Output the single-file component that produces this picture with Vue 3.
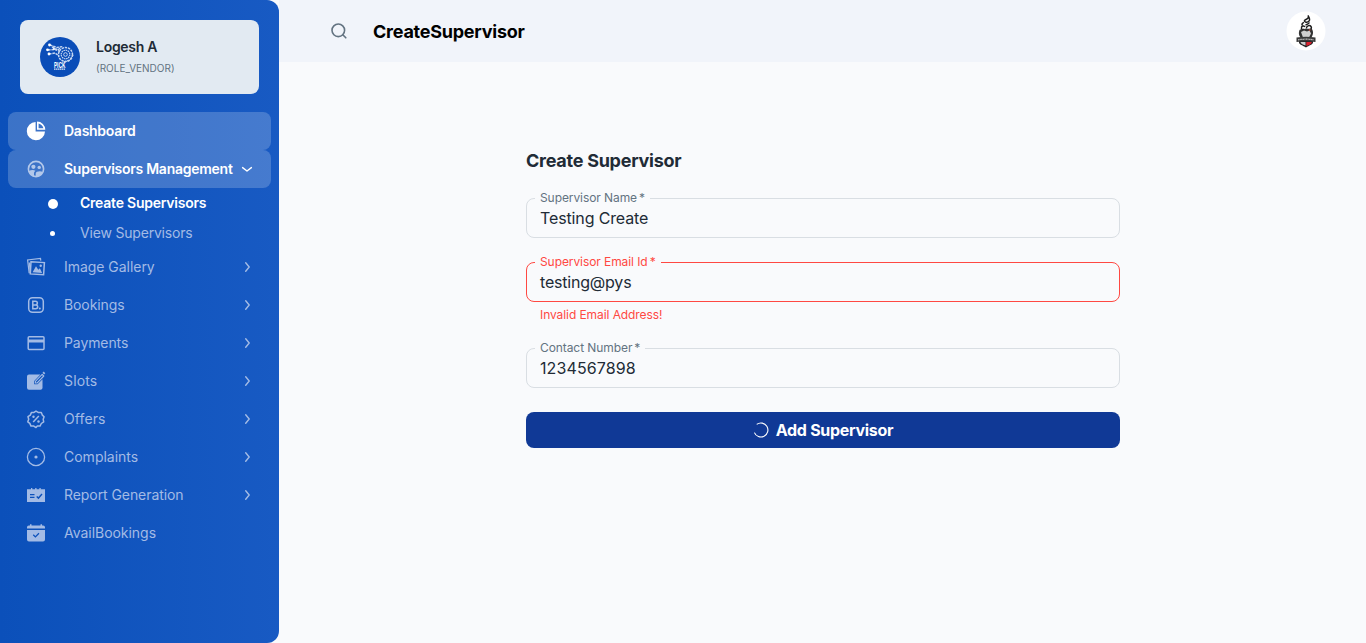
<script setup>
const before = [
  { label: 'Dashboard', icon: 'pie', active: true, ls: '-0.26px' },
  { label: 'Supervisors Management', icon: 'users', active: true, dim: true, arrow: 'down', ls: '-0.26px' },
]
const after = [
  { label: 'Image Gallery', icon: 'image', arrow: 'right', ls: '-0.04px' },
  { label: 'Bookings', icon: 'book', arrow: 'right', ls: '-0.1px' },
  { label: 'Payments', icon: 'card', arrow: 'right', ls: '-0.1px' },
  { label: 'Slots', icon: 'edit', arrow: 'right', ls: '0.15px' },
  { label: 'Offers', icon: 'offer', arrow: 'right', ls: '0.1px' },
  { label: 'Complaints', icon: 'dot', arrow: 'right', ls: '0px' },
  { label: 'Report Generation', icon: 'report', arrow: 'right', ls: '-0.07px' },
  { label: 'AvailBookings', icon: 'calendar', ls: '-0.03px' },
]
const rows = [...before, { sub: true }, ...after]
const fields = [
  { id: 'name', label: 'Supervisor Name', value: 'Testing Create' },
  { id: 'email', label: 'Supervisor Email Id', value: 'testing@pys', error: 'Invalid Email Address!' },
  { id: 'phone', label: 'Contact Number', value: '1234567898' },
]
</script>

<template>
  <div class="app">
    <aside class="sidebar">
      <div class="profile">
        <svg class="avatar" viewBox="0 0 40 40">
          <circle cx="20" cy="20" r="20" fill="#0a4db8" />
          <g fill="none" stroke="#c4d6f1">
            <circle cx="25.5" cy="17.5" r="7" stroke-width="1.5" stroke-dasharray="2.4 .8" />
            <circle cx="25.5" cy="17.5" r="4.3" stroke-width="1.2" stroke-dasharray="1.6 .6" />
            <circle cx="25.5" cy="17.5" r="1.8" stroke-width="1" />
            <path d="M10 8l7 2.500 6-1M8 13l7-.5 5 2M9 17l6-1 4 3M24 25l6-2 3-5M12 10l6 3 2-2" stroke-width="1.4" stroke-dasharray="2.6 .8" />
          </g>
          <g fill="#fff"><circle cx="9.5" cy="8" r="1.4" /><circle cx="7.500" cy="12.8" r="1.4" /><circle cx="9" cy="17" r="1.4" /><circle cx="14" cy="12" r="1.1" /></g>
          <text x="14" y="30.7" fill="#fff" font-size="8" font-weight="700" textLength="11.5" lengthAdjust="spacingAndGlyphs">PICK</text>
          <path d="M14 32.2h11.5" stroke="#dbe6f7" stroke-width="1.3" stroke-dasharray="1.5 .4" />
        </svg>
        <div class="who">
          <div class="pname">Logesh A</div>
          <div class="prole">(ROLE_VENDOR)</div>
        </div>
      </div>
      <nav>
        <template v-for="r in rows" :key="r.label || 'sub'">
          <div v-if="r.sub" class="subs">
            <div class="sub on"><i></i><span>Create Supervisors</span></div>
            <div class="sub"><i></i><span>View Supervisors</span></div>
          </div>
          <div v-else class="row" :class="{ active: r.active }">
            <svg class="icon" :class="{ dim: r.dim }" viewBox="0 0 24 24" fill="none" stroke="currentColor">
              <g v-if="r.icon === 'pie'" fill="currentColor" stroke="none">
                <path d="M11.6 3v9.4H21A9.1 9.1 0 1 1 11.6 3z" />
                <path fill-rule="evenodd" d="M13 2.5a8.3 8.3 0 0 1 8.3 8.3H13zM14.6 4.4v4.8h4.8a6.8 6.8 0 0 0-4.8-4.8z" />
              </g>
              <g v-else-if="r.icon === 'users'">
                <circle cx="12" cy="12" r="7.6" stroke-width="1.6" />
                <circle cx="9.4" cy="9.8" r="2.1" fill="currentColor" stroke="none" />
                <circle cx="15.2" cy="10.4" r="1.7" fill="currentColor" stroke="none" />
                <path d="M4.8 14.2c2-1.300 4.600-1.400 6.600-.5-1 .8-1.500 1.800-1.400 3v3a8 8 0 0 1-5.200-5.500zM11.700 20v-3.500c0-2.2 5-2.800 7.200-1.400-.9 2.800-3.500 4.900-7.200 4.900z" fill="currentColor" stroke="none" />
              </g>
              <g v-else-if="r.icon === 'image'">
                <path d="M5.200 18.200L3.600 5l12.900-1.500.3 2.200" stroke-width="1.200" />
                <path d="M7 6.800l13.400.8-.8 12.200-13.300-.9z" stroke-width="1.500" />
                <path d="M8.600 17.300L12 11.300l2.300 3.500 1.600-1.600 2.200 4.700z" fill="currentColor" stroke="none" />
                <circle cx="16.700" cy="10.800" r="1.200" fill="currentColor" stroke="none" />
                <path d="M5.300 7.500l1 10.500" stroke-width="1.200" />
              </g>
              <g v-else-if="r.icon === 'book'" stroke-width="1.5">
                <rect x="4.7" y="4.7" width="14.6" height="14.6" rx="3.800" />
                <path d="M8.800 8.2h2.7a1.8 1.8 0 0 1 0 3.7H8.800zm0 3.7h3a1.9 1.9 0 0 1 0 3.8h-3z" />
                <circle cx="15.8" cy="15.500" r="1" fill="currentColor" stroke="none" />
              </g>
              <g v-else-if="r.icon === 'card'">
                <rect x="4.200" y="5.800" width="15.800" height="12.600" rx="1" stroke-width="1.500" />
                <path d="M4 10h16" stroke-width="3" />
              </g>
              <g v-else-if="r.icon === 'edit'">
                <path d="M5 5.6h11.4L10.200 12v3.2h3.400l4.900-5v8.800A2 2 0 0 1 16.500 20.800H5a2 2 0 0 1-2-2V7.600a2 2 0 0 1 2-2z" fill="currentColor" stroke="none" />
                <path d="M11.400 14v-1.700l6.800-6.900 1.600 1.600-6.700 7z" stroke-width="1.100" stroke-linejoin="round" />
                <path d="M19.300 4.600l1.200-1.200" stroke-width="2.200" />
              </g>
              <g v-else-if="r.icon === 'offer'" stroke-width="1.5">
                <path d="M12 4.100l2.200 1.300h3.100l1 2.700 1.800 1.700-.9 2.500.5 2.600-2.400 1.600-1.300 2.600-2.700-.1L12 20.500l-2.200-1.400H7l-1.200-2.700-2-1.600.9-2.600-.7-2.500 2.300-1.600 1.200-2.700H10z" stroke-linejoin="round" />
                <path d="M9.200 15l5.600-6" />
                <circle cx="9.500" cy="9.700" r="1.200" fill="currentColor" stroke="none" /><circle cx="14.500" cy="14.500" r="1.200" fill="currentColor" stroke="none" />
              </g>
              <g v-else-if="r.icon === 'dot'">
                <circle cx="12" cy="12" r="8.600" stroke-width="1.300" /><circle cx="12" cy="12" r="1.600" fill="currentColor" stroke="none" />
              </g>
              <path v-else-if="r.icon === 'report'" fill="currentColor" stroke="none" fill-rule="evenodd" d="M3 6.200h4V5h1.300v1.200h2.900V5h1.300v1.200h2.900V5h1.300v1.200H21V19H3zM6 11v1.300h4.500V11zm0 2.800v1.300h4.500v-1.300zm7.200-.8-1 1 2.300 2.200 4-4.800-1-.9-3.100 3.600z" />
              <g v-else fill="currentColor" stroke="none">
                <path d="M3 7.500V6.300a1.900 1.900 0 0 1 1.900-1.900H6V3.200h1.500v1.200h9V3.200H18v1.200h1.100A1.900 1.900 0 0 1 21 6.300v1.200z" />
                <path fill-rule="evenodd" d="M3 9h18v9.500a2 2 0 0 1-2 2H5a2 2 0 0 1-2-2zM9.700 13.300l-.9.9 2.600 2.500 4-4-.9-.9-3.100 3.100z" />
              </g>
            </svg>
            <span class="label" :style="{ letterSpacing: r.ls }">{{ r.label }}</span>
            <svg v-if="r.arrow" class="arrow" viewBox="0 0 16 16" fill="none" stroke="currentColor" stroke-width="1.4" stroke-linecap="round" stroke-linejoin="round">
              <path v-if="r.arrow === 'down'" d="M3.600 6.600L8 10l4.400-3.400" />
              <path v-else d="M6.700 3.800L10.200 8l-3.500 4.200" />
            </svg>
          </div>
        </template>
      </nav>
    </aside>

    <div class="page">
      <header>
        <svg class="search" viewBox="0 0 20 20" fill="none" stroke="#637381" stroke-width="1.600">
          <circle cx="9.300" cy="9.300" r="6.300" /><path d="M13.800 13.800l3 3" stroke-linecap="round" />
        </svg>
        <h1>CreateSupervisor</h1>
        <svg class="logo" viewBox="0 0 40 40">
          <circle cx="20" cy="20" r="19.500" fill="#fff" />
          <g fill="none" stroke="#1d1d1d" stroke-width="1.500">
            <path d="M22 4.500c1.500 2-.5 3.500-2.500 4.200-1.800.8-1.200 2.300.5 2.500 2.500.3 4-1.500 3.500-3.500-.2-1-1-2-1.500-3.200z" />
            <path d="M18 11.500c-2 .5-2.500 2-1.500 3M23.500 11.500c-.8 1.500-2.500 2-4 2.500" />
            <path d="M19 16c-1-2-4-1-3.500 1.500.3 1.500 2 1.500 3 .5M20.500 17.500c-.5-2.500 3-4 4.500-2 1 1.500 0 3-1.500 3" />
          </g>
          <path d="M13.500 19c2-1.500 4 0 6.500-1.500 2.500 1 4.500-.5 6 .5 1.500 2.500 1.500 5-.5 8.500h-11c-2-2.500-2-5-1-7.500z" fill="#333" />
          <path d="M15 21l3-1.500 3 1 2.500-1 1.500 3-2 4h-6z" fill="#d0d0d0" />
          <circle cx="23.700" cy="19" r=".8" fill="#d74b36" />
          <path d="M13 28h14v3.500c0 2-4 3-7 5-3-2-7-3-7-5z" fill="#222" />
          <path d="M14.500 31h5v3.500c-3-1-5-2-5-3.500z" fill="#ccc" /><path d="M20.300 31h5.500c0 2-2.500 3-5.500 4z" fill="#d9212e" />
          <path d="M10.500 26.500q9.500-1.500 19 0v4.500q-9.500-1.500-19 0z" fill="#3a3a3a" /><path d="M12 28.800q8-1.200 16 0" fill="none" stroke="#bbb" stroke-width="1.200" stroke-dasharray="1.200 .4" />
        </svg>
      </header>
      <main>
        <h2>Create Supervisor</h2>
        <div v-for="f in fields" :key="f.id" class="field" :class="[f.id, { bad: f.error }]">
          <div class="box"><span class="lab">{{ f.label }}<span class="star">*</span></span><span class="val">{{ f.value }}</span></div>
          <p v-if="f.error">{{ f.error }}</p>
        </div>
        <button>
          <svg viewBox="0 0 16 16" fill="none" stroke="#fff" stroke-width="1.100"><path d="M3.700 2.400A7 7 0 1 1 1.400 10.600" /></svg>
          <span>Add Supervisor</span>
        </button>
      </main>
    </div>
  </div>
</template>

<style>
body { background: #f9fafc; }
</style>
<style scoped>
* { box-sizing: border-box; margin: 0; }
.app { display: flex; height: 643px; font-family: Inter, sans-serif; color: #212b36; background: #f9fafc; overflow: hidden; }
.sidebar { width: 279px; flex: none; border-radius: 0 12px 12px 0; background: linear-gradient(90deg, #0b50ba, #185ac3); padding: 20px 8px 0; }
.profile { width: 239px; height: 74px; margin-left: 12px; border-radius: 8px; background: #e2eaf2; display: flex; align-items: center; padding-left: 20px; gap: 16px; }
.avatar { width: 40px; height: 40px; }
.who { padding-bottom: 2px; }
.pname { font-size: 14px; font-weight: 600; line-height: 21px; letter-spacing: -.28px; }
.prole { font-size: 10px; line-height: 18px; margin-top: 2px; color: #637381; }
nav { margin-top: 18px; color: #a3bbe5; }
.row { height: 38px; display: flex; align-items: center; padding: 0 16px; border-radius: 8px; font-size: 14px; }
.row.active { background: rgba(255, 255, 255, .2); color: #fff; font-weight: 600; }
.icon { width: 24px; height: 24px; flex: none; }
.icon.dim { color: #b3c8ea; }
.label { margin-left: 16px; padding-bottom: 2px; white-space: nowrap; flex: 1; }
.arrow { width: 16px; height: 16px; flex: none; }
.sub { height: 30px; display: flex; align-items: center; font-size: 14px; padding-left: 37px; letter-spacing: -.19px; }
.sub i { width: 15px; display: flex; justify-content: center; }
.sub i::before { content: ''; width: 5px; height: 5px; border-radius: 50%; background: #fff; }
.sub.on i { width: 16px; padding-top: 1px; }
.sub.on i::before { width: 10px; height: 10px; }
.sub span { margin-left: 20px; padding-bottom: 2px; }
.sub.on { color: #fff; font-weight: 600; letter-spacing: -.23px; }
.sub.on span { margin-left: 19px; }
.page { flex: 1; }
header { height: 62px; background: #f1f4fa; display: flex; align-items: center; padding: 0 40px 0 50px; }
.search { width: 20px; height: 20px; }
h1 { font-size: 18px; font-weight: 700; color: #000; margin-left: 24px; letter-spacing: -.24px; flex: 1; }
.logo { width: 40px; height: 40px; }
main { width: 594px; margin: 85px 0 0 247px; }
h2 { font-size: 18px; line-height: 28px; font-weight: 700; letter-spacing: -.26px; margin-bottom: 23px; }
.box { position: relative; height: 40px; border: 1px solid #d9dee3; border-radius: 8px; padding: 0 13px; line-height: 38px; font-size: 16px; letter-spacing: -.13px; }
.phone .val { letter-spacing: .1px; }
.email .val { letter-spacing: -.2px; }
.field { margin-bottom: 24px; }
.lab { position: absolute; left: 8px; top: -9px; padding: 0 5px; background: #f9fafc; font-size: 12px; line-height: 16px; color: #637381; white-space: nowrap; letter-spacing: -.08px; }
.star { margin-left: 2px; }
.bad .box { border-color: #ff4842; }
.bad .lab, p { color: #ff4842; }
p { font-size: 12px; line-height: 18px; margin: 4px 14px 0; letter-spacing: -.08px; }
button { width: 100%; height: 36px; border: 0; border-radius: 8px; background: #103996; color: #fff; font: 700 16px Inter, sans-serif; letter-spacing: -.3px; display: flex; align-items: center; justify-content: center; gap: 7px; }
button svg { width: 16px; height: 16px; }
</style>
